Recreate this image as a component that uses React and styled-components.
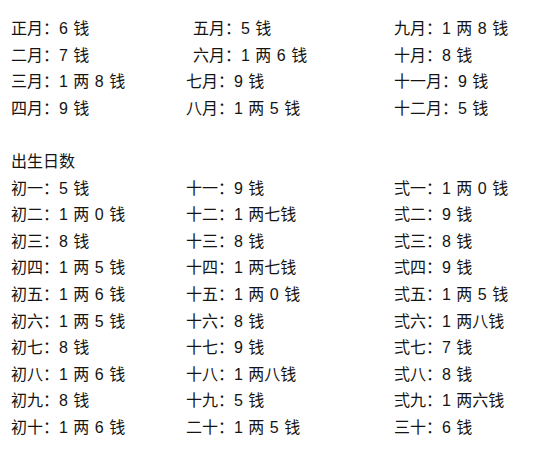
import React from "react";
import styled, { createGlobalStyle } from "styled-components";

const GlobalStyle = createGlobalStyle`
  html, body {
    margin: 0;
    padding: 0;
    background: #ffffff;
  }
  body {
    font-family: "Liberation Sans", "Noto Sans CJK SC", sans-serif;
    color: #141414;
  }
`;

const months = [
  ["正月：6 钱", "五月：5 钱", "九月：1 两 8 钱"],
  ["二月：7 钱", "六月：1 两 6 钱", "十月：8 钱"],
  ["三月：1 两 8 钱", "七月：9 钱", "十一月：9 钱"],
  ["四月：9 钱", "八月：1 两 5 钱", "十二月：5 钱"],
];

// 五月 / 六月 sit a little to the right in the original
const monthShift = { "五月：5 钱": 7, "六月：1 两 6 钱": 7 };

const days = [
  ["初一：5 钱", "十一：9 钱", "弍一：1 两 0 钱"],
  ["初二：1 两 0 钱", "十二：1 两七钱", "弍二：9 钱"],
  ["初三：8 钱", "十三：8 钱", "弍三：8 钱"],
  ["初四：1 两 5 钱", "十四：1 两七钱", "弍四：9 钱"],
  ["初五：1 两 6 钱", "十五：1 两 0 钱", "弍五：1 两 5 钱"],
  ["初六：1 两 5 钱", "十六：8 钱", "弍六：1 两八钱"],
  ["初七：8 钱", "十七：9 钱", "弍七：7 钱"],
  ["初八：1 两 6 钱", "十八：1 两八钱", "弍八：8 钱"],
  ["初九：8 钱", "十九：5 钱", "弍九：1 两六钱"],
  ["初十：1 两 6 钱", "二十：1 两 5 钱", "三十：6 钱"],
];

const Page = styled.div`
  width: 536px;
  height: 452px;
  box-sizing: border-box;
  padding: 16px 0 0 11px;
  overflow: hidden;
`;

const Table = styled.div`
  display: grid;
  grid-template-columns: 175px 208px 1fr;
  grid-auto-rows: 26.6px;
  font-size: 16px;
  line-height: 26.6px;
  white-space: pre;
  word-spacing: 1px;
`;

const Cell = styled.div`
  padding-left: ${(p) => p.$shift || 0}px;
`;

const Heading = styled.div`
  grid-column: 1 / -1;
  margin-top: 26.6px;
  font-size: 16px;
  line-height: 26.6px;
`;

const App = () => {
  return (
    <>
      <GlobalStyle />
      <Page>
        <Table>
          {months.flat().map((t) => (
            <Cell key={t} $shift={monthShift[t]}>
              {t}
            </Cell>
          ))}
        </Table>
        <Heading>出生日数</Heading>
        <Table>
          {days.flat().map((t) => (
            <Cell key={t}>{t}</Cell>
          ))}
        </Table>
      </Page>
    </>
  );
};

export default App;
